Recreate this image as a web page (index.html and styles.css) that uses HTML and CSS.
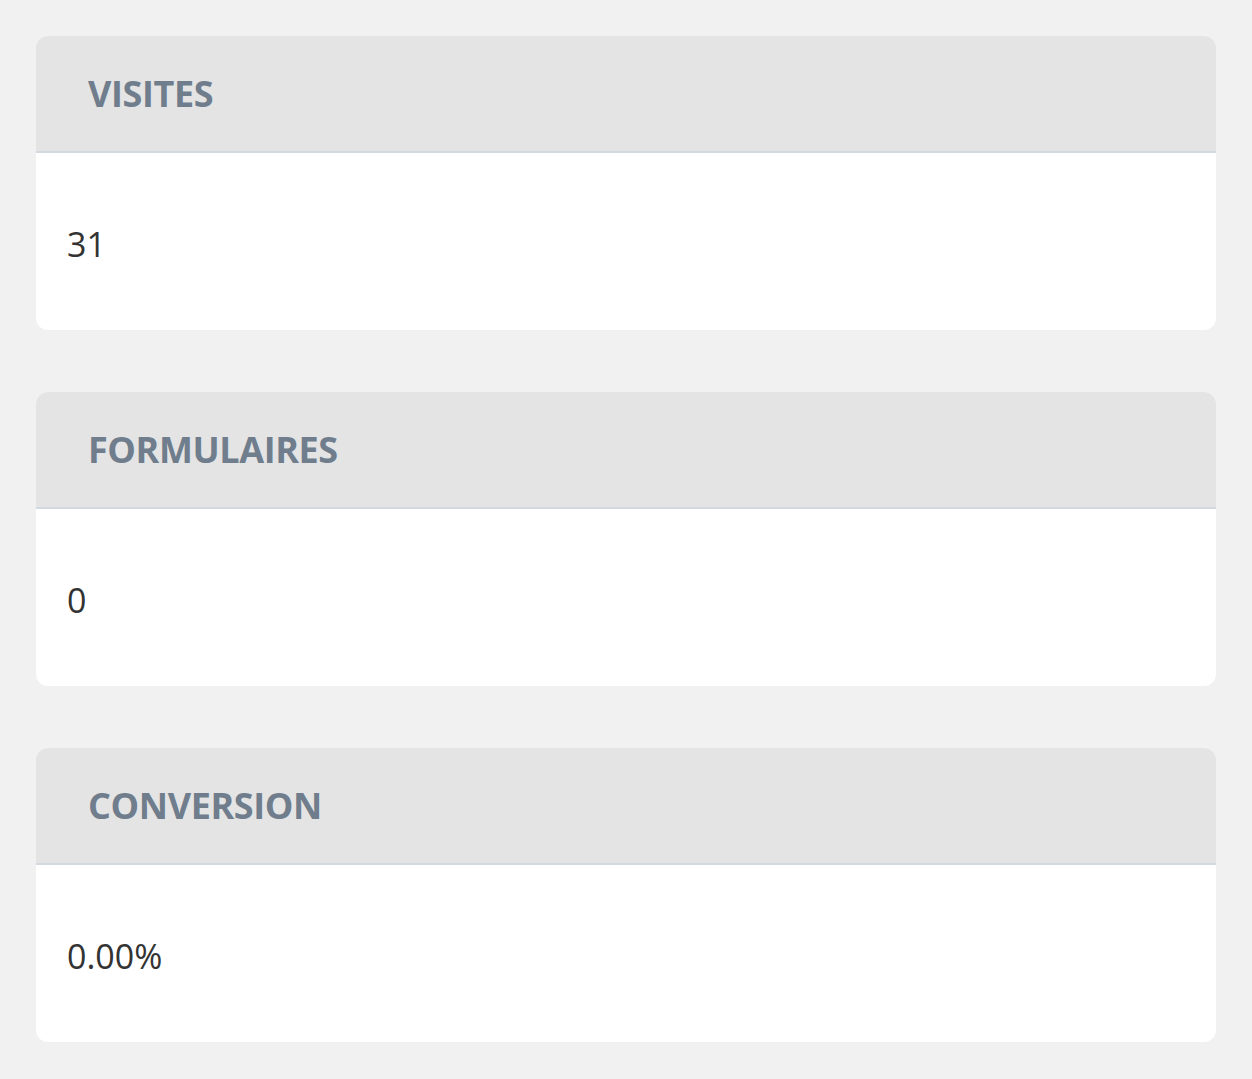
FILE: index.html
```html
<!DOCTYPE html>
<html>
<head>
  <link rel="stylesheet" href="styles.css">
</head>
<body>

  <div class="stats">
    <div class="card">
      <div class="card-header">VISITES</div>
      <div class="card-body">31</div>
    </div>
    <div class="card">
      <div class="card-header">FORMULAIRES</div>
      <div class="card-body">0</div>
    </div>
    <div class="card">
      <div class="card-header">CONVERSION</div>
      <div class="card-body">0.00%</div>
    </div>
  </div>

</body>
</html>
```

FILE: styles.css
```css
body {
  margin: 0;
  background-color: #f1f1f1;
  font-family: 'Open Sans', 'Liberation Sans', sans-serif;
}
.stats {
  padding: 36px 36px 0 36px;
  display: flex;
  flex-direction: column;
  gap: 62px;
}
.card {
  background-color: #fff;
  border-radius: 12px;
  overflow: hidden;
}
.card-header {
  height: 117px;
  box-sizing: border-box;
  display: flex;
  align-items: center;
  padding-left: 52px;
  background-color: #e4e4e4;
  border-bottom: 2px solid #d3d9e0;
  color: #6f7d8c;
  font-size: 36px;
  font-weight: bold;
  letter-spacing: -0.4px;
}
.card-body {
  height: 177px;
  box-sizing: border-box;
  display: flex;
  align-items: center;
  padding: 4px 0 0 31px;
  color: #333;
  font-size: 34px;
}
```
